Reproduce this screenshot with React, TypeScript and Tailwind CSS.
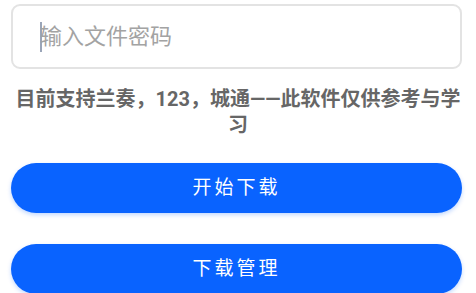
import { useState } from "react";

function App() {
  const [password, setPassword] = useState("");

  return (
    <main className="w-full min-h-screen bg-white px-[11px] pt-[4px] font-['Roboto','Noto_Sans_CJK_SC',sans-serif]">
      <div className="h-[65px] w-[451px] rounded-[9px] border-2 border-[#e3e3e3] flex items-center pl-[27px]">
        {/* caret shown in the screenshot */}
        <span className="w-[2px] h-[30px] bg-[#9aa5b8] -mr-[2px] shrink-0" />
        <input
          value={password}
          onChange={(e) => setPassword(e.target.value)}
          placeholder="输入文件密码"
          className="w-full bg-transparent outline-none text-[22px] text-[#333] placeholder:text-[#a3a3a3] caret-[#9aa5b8]"
        />
      </div>

      <p className="mt-[17px] text-center text-[20px] leading-[26px] font-bold text-[#666]">
        目前支持兰奏，123，城通——此软件仅供参考与学习
      </p>

      <div className="flex flex-col gap-[31px] mt-[25px]">
        <button className="h-[50px] w-[451px] rounded-full bg-[#0963ff] text-white text-[19px] tracking-[3px] shadow-[0_2px_4px_rgba(9,99,255,0.25)]">
          开始下载
        </button>
        <button className="h-[50px] w-[451px] rounded-full bg-[#0963ff] text-white text-[19px] tracking-[3px] shadow-[0_2px_4px_rgba(9,99,255,0.25)]">
          下载管理
        </button>
      </div>
    </main>
  );
}

export default App;
